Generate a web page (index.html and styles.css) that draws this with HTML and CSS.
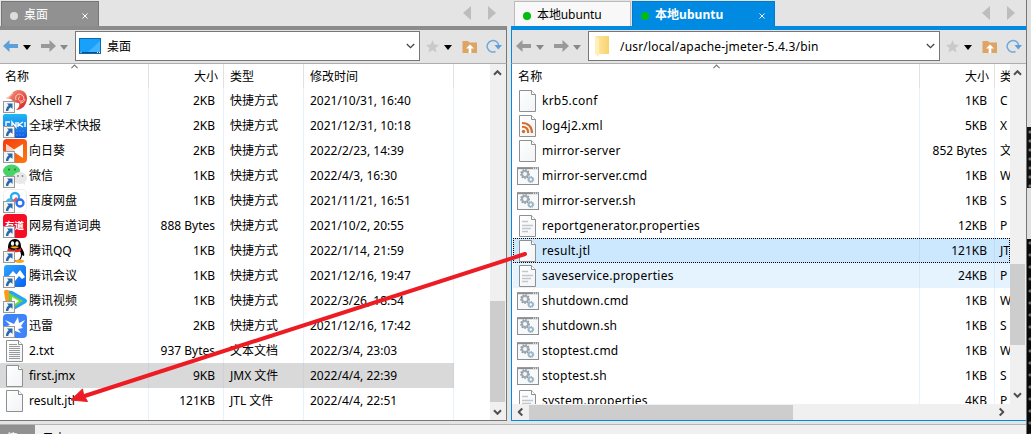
FILE: index.html
```html
<!DOCTYPE html>
<html lang="zh-CN">
<head>
<meta charset="utf-8">
<title>Xftp</title>
<link rel="stylesheet" href="styles.css">
</head>
<body>
<svg class="defs" width="0" height="0">
  <defs>
    <linearGradient id="g-paper" x1="0" y1="0" x2="1" y2="1"><stop offset="0" stop-color="#fff"/><stop offset="1" stop-color="#f1f3f5"/></linearGradient>
    <linearGradient id="g-folder"><stop offset="0" stop-color="#ffe9a6"/><stop offset="1" stop-color="#f8d270"/></linearGradient>
    <linearGradient id="g-shell" x1="0" y1="0" x2="1" y2="1"><stop offset="0" stop-color="#f9a284"/><stop offset="1" stop-color="#d7191f"/></linearGradient>
    <linearGradient id="g-cnki" x1="0" y1="0" x2="0" y2="1"><stop offset="0" stop-color="#20b8f5"/><stop offset="1" stop-color="#1458e0"/></linearGradient>
    <linearGradient id="g-sun" x1="0" y1="0" x2="1" y2="1"><stop offset="0" stop-color="#f23c10"/><stop offset="1" stop-color="#ff7a10"/></linearGradient>
    <linearGradient id="g-meet" x1="0" y1="0" x2="1" y2="1"><stop offset="0" stop-color="#2aa5ff"/><stop offset="1" stop-color="#0a62f0"/></linearGradient>
    <symbol id="link" viewBox="0 0 24 24"><rect x=".5" y="12.500" width="11" height="11" fill="#f6f6f6" stroke="#999"/><path d="M4 14.500h5.500v5.500l-1.700-1.700c-1.600 1-2.300 2-2.500 3.700h-2.300c-.2-2.300.8-4 2.700-5.800z" fill="#2968aa"/></symbol>
    <symbol id="file" viewBox="0 0 24 24"><path d="M3.500 1.500h12l4 4v17h-16z" fill="url(#g-paper)" stroke="#8d8f91"/><path d="M15.500 1.500v4h4" fill="#fff" stroke="#8d8f91"/></symbol>
    <symbol id="txt" viewBox="0 0 24 24"><use href="#file"/><path d="M6 5.500h8M6 7.500h11M6 9.500h11M6 11.500h11M6 13.500h11M6 15.500h11M6 17.500h11M6 19.500h11" stroke="#999"/></symbol>
    <symbol id="props" viewBox="0 0 24 24"><use href="#file"/><path d="M6 7.500h6M6 11.500h11M6 14.500h9M6 17.500h6" stroke="#c4c7ca" stroke-width="1.500"/></symbol>
    <symbol id="xml" viewBox="0 0 24 24"><use href="#file"/><circle cx="7.500" cy="17.500" r="1.700" fill="#d66d2e"/><path d="M6 12.800c4 0 6.200 2.400 6.200 6.200M6 9c6.500 0 10 4 10 10" fill="none" stroke="#d66d2e" stroke-width="2.100"/></symbol>
    <symbol id="cmd" viewBox="0 0 24 24"><rect x="1.500" y="4" width="21" height="16.500" fill="#f8f9fa" stroke="#8b8e91"/><path d="M1 4.200h22" stroke="#8b8e91" stroke-width="2"/><path d="M17 4.200h5" stroke="#fff" stroke-dasharray="1 1"/><circle cx="9" cy="10" r="3" fill="none" stroke="#a1abb3" stroke-width="2"/><circle cx="9" cy="10" r="4.200" fill="none" stroke="#8d98a0" stroke-width="1.400" stroke-dasharray="1.500 1.300"/><circle cx="14.800" cy="15.500" r="2" fill="none" stroke="#9bb5c7" stroke-width="1.600"/><circle cx="14.800" cy="15.500" r="3" fill="none" stroke="#7d9eb4" stroke-dasharray="1.200 1.100"/></symbol>
    <symbol id="xshell" viewBox="0 0 24 24"><path d="M2 9C8 9 8 1 16 1c5 0 8 4 8 8 0 7-5 12-11 12 3-2 4-5 3-7-3 0-6-1-8-4z" fill="url(#g-shell)"/><path d="M13 11c-2-5 4-8 7-4 2 3 0 6-3 5-2-1-2-4 0-4M4 9c3 0 4-3 6-5M17 14c3 0 5-2 5-4" fill="none" stroke="#fbd1c4" stroke-width="1"/><use href="#link"/></symbol>
    <symbol id="cnki" viewBox="0 0 24 24"><rect width="24" height="24" rx="2" fill="url(#g-cnki)"/><path d="M7 8H3v5M9 13V8l4 5V8M15 8v5M20 8l-4 2.500 4 2.500M22 8v5" fill="none" stroke="#fff" stroke-width="1.400"/><path d="M13 17h9M13 21h8" stroke="#3a8bf0" stroke-dasharray="2 1"/><use href="#link"/></symbol>
    <symbol id="sun" viewBox="0 0 24 24"><rect width="24" height="24" rx="4" fill="url(#g-sun)"/><path d="M3 5l8 5.500L20 5v14l-9-6-7 6z" fill="#fff"/><path d="M3 5l8.500 6.500L4 16z" fill="#ffd1c2"/><use href="#link"/></symbol>
    <symbol id="wechat" viewBox="0 0 24 24"><ellipse cx="8.500" cy="7" rx="8.500" ry="6.500" fill="#4ad266"/><circle cx="6" cy="5.500" r="1" fill="#1a7e37"/><circle cx="12" cy="5.500" r="1" fill="#1a7e37"/><ellipse cx="17" cy="14" rx="7" ry="6" fill="#e8e8e8"/><path d="M20 19l2 2v-4z" fill="#e8e8e8"/><circle cx="15" cy="12" r=".9" fill="#888"/><circle cx="19.500" cy="12" r=".9" fill="#888"/><use href="#link"/></symbol>
    <symbol id="pan" viewBox="0 0 24 24"><rect x=".5" y=".5" width="23" height="23" rx="4" fill="#fff" stroke="#eee"/><circle cx="12" cy="8" r="4" fill="none" stroke="#28a7f5" stroke-width="2.300"/><circle cx="7" cy="14" r="3.500" fill="none" stroke="#28bdf5" stroke-width="2.300"/><circle cx="17" cy="14" r="3.500" fill="none" stroke="#2b6ff2" stroke-width="2.300"/><path d="M10 13l4-4" stroke="#f44e60" stroke-width="2.500"/><use href="#link"/></symbol>
    <symbol id="youdao" viewBox="0 0 24 24"><rect width="24" height="24" rx="4" fill="#f40d25"/><text x="2" y="15" font-size="9.500" font-weight="bold" fill="#fff">有道</text><use href="#link"/></symbol>
    <symbol id="qq" viewBox="0 0 24 24"><path d="M5 9c0-6 3-9 7-9s6 3 6 8c2 3 4 6 3 9-1 0-2-1-2-1 0 4-3 7-7 7-6 0-9-5-7-14z" fill="#050505"/><ellipse cx="9.500" cy="4.500" rx="1.600" ry="2.200" fill="#fff"/><ellipse cx="14" cy="4.500" rx="1.600" ry="2.200" fill="#fff"/><path d="M7 8q5-1.500 9 0-4 3-9 0z" fill="#ffae13"/><ellipse cx="13" cy="16" rx="5" ry="5.500" fill="#fff"/><path d="M5 9q7 4 13 0v3q-3 2-8 1v4H8v-4l-3-1z" fill="#ee1d24"/><ellipse cx="16.500" cy="22.300" rx="4.500" ry="1.700" fill="#f9a716"/><use href="#link"/></symbol>
    <symbol id="meet" viewBox="0 0 24 24"><rect x="1" y="1" width="22" height="22" rx="3" fill="url(#g-meet)"/><path d="M3 15l7-8 3.500 3.500L17 6l5 7-3 2-3-3-4 5H6z" fill="#fff"/><use href="#link"/></symbol>
    <symbol id="video" viewBox="0 0 24 24"><path d="M1 3q0-3 4-2l9 4v14l-10 3z" fill="#ff9a17"/><path d="M6 2q2-1 5 1l12 7q2 2 0 4l-14 8q-4 0-3-5z" fill="#24a8f2"/><path d="M6 4l14 8-12 8q-2-9-2-16z" fill="#71d634"/><path d="M9 8l7 4-7 5z" fill="#fff"/><use href="#link"/></symbol>
    <symbol id="xunlei" viewBox="0 0 24 24"><rect width="24" height="24" rx="4" fill="#3f83fb"/><path d="M2 6l9 4 4-7 1 6 6-3-4 6 2 2-5 1 3 4-6-2-3 4v-6L4 12l3-1z" fill="#fff"/><use href="#link"/></symbol>
    <symbol id="nav-left" viewBox="0 0 16 12"><path d="M0 6l6.500-6v4H15v4H6.500v4z" fill="currentColor"/></symbol>
    <symbol id="caret" viewBox="0 0 8 5"><path d="M0 0h8L4 5z" fill="currentColor"/></symbol>
    <symbol id="chev" viewBox="0 0 9 6"><path d="M.8 1l3.700 3.700L8.200 1" fill="none" stroke="currentColor" stroke-width="1.300"/></symbol>
    <symbol id="sb-chev" viewBox="0 0 9 6"><path d="M1 4.800l3.500-3.600L8 4.800" fill="none" stroke="#505050" stroke-width="2"/></symbol>
    <symbol id="pager" viewBox="0 0 33 14"><path d="M8 0v14L0 7zM25 0v14l8-7z" fill="#bdbdbd"/></symbol>
    <symbol id="star" viewBox="0 0 13 13"><path d="M6.500 0l1.900 4.400 4.600.5-3.500 3 1 4.700-4-2.500-4 2.500 1-4.700L0 4.900l4.600-.5z" fill="#c9c9c9"/></symbol>
    <symbol id="upfolder" viewBox="0 0 15 13"><path d="M.5 1H6l1.500 1.500H15V13H.5z" fill="#dca564"/><path d="M8 4.500l4 4H9.300V13H6.700V8.500H4z" fill="#fff"/></symbol>
    <symbol id="refresh" viewBox="0 0 16 14"><path d="M9.500 12.500A5.800 5.800 0 1 1 12.700 6.500" fill="none" stroke="#70a9dc" stroke-width="1.500"/><path d="M8.500 6H16l-3.700 4.500z" fill="#5d9edc"/></symbol>
  </defs>
</svg>
<main class="app">
  <div class="panels">
    <section class="panel local">
      <div class="tabs">
        <div class="tab gray"><i class="dot"></i><span>桌面</span><svg class="close" viewBox="0 0 6 6"><path d="M.5.5l5 5m0-5l-5 5" stroke="currentColor"/></svg></div>
        <svg class="pager"><use href="#pager"/></svg>
      </div>
      <div class="toolbar">
        <div class="nav"><svg class="arr on"><use href="#nav-left"/></svg><svg class="caret dark"><use href="#caret"/></svg><svg class="arr fwd"><use href="#nav-left"/></svg><svg class="caret"><use href="#caret"/></svg></div>
        <div class="address"><svg class="desk" viewBox="0 0 22 16"><rect x=".5" y=".5" width="21" height="15" fill="#19a0fa" stroke="#066cae"/><path d="M9 14L21 3v11z" fill="#42b3ff"/><path d="M1 14.500h20" stroke="#064d83"/><path d="M1.500 14.500h1M18 14.500h3" stroke="#fff" stroke-dasharray="1 1"/></svg><span>桌面</span><svg class="chev"><use href="#chev"/></svg></div>
        <svg class="star"><use href="#star"/></svg><svg class="caret dark"><use href="#caret"/></svg><svg class="upf"><use href="#upfolder"/></svg><svg class="ref"><use href="#refresh"/></svg>
      </div>
      <div class="body">
        <div class="list">
          <svg class="sort"><use href="#chev"/></svg>
          <div class="row head"><b>名称</b><b>大小</b><b>类型</b><b>修改时间</b></div>
          <div class="row"><b><svg><use href="#xshell"/></svg>Xshell 7</b><b>2KB</b><b>快捷方式</b><b>2021/10/31, 16:40</b></div>
          <div class="row"><b><svg><use href="#cnki"/></svg>全球学术快报</b><b>2KB</b><b>快捷方式</b><b>2021/12/31, 10:18</b></div>
          <div class="row"><b><svg><use href="#sun"/></svg>向日葵</b><b>2KB</b><b>快捷方式</b><b>2022/2/23, 14:39</b></div>
          <div class="row"><b><svg><use href="#wechat"/></svg>微信</b><b>1KB</b><b>快捷方式</b><b>2022/4/3, 16:30</b></div>
          <div class="row"><b><svg><use href="#pan"/></svg>百度网盘</b><b>1KB</b><b>快捷方式</b><b>2021/11/21, 16:51</b></div>
          <div class="row"><b><svg><use href="#youdao"/></svg>网易有道词典</b><b>888 Bytes</b><b>快捷方式</b><b>2021/10/2, 20:55</b></div>
          <div class="row"><b><svg><use href="#qq"/></svg>腾讯QQ</b><b>1KB</b><b>快捷方式</b><b>2022/1/14, 21:59</b></div>
          <div class="row"><b><svg><use href="#meet"/></svg>腾讯会议</b><b>1KB</b><b>快捷方式</b><b>2021/12/16, 19:47</b></div>
          <div class="row"><b><svg><use href="#video"/></svg>腾讯视频</b><b>1KB</b><b>快捷方式</b><b>2022/3/26, 18:54</b></div>
          <div class="row"><b><svg><use href="#xunlei"/></svg>迅雷</b><b>2KB</b><b>快捷方式</b><b>2021/12/16, 17:42</b></div>
          <div class="row"><b><svg><use href="#txt"/></svg>2.txt</b><b>937 Bytes</b><b>文本文档</b><b>2022/3/4, 23:03</b></div>
          <div class="row picked"><b><svg><use href="#file"/></svg>first.jmx</b><b>9KB</b><b>JMX 文件</b><b>2022/4/4, 22:39</b></div>
          <div class="row"><b><svg><use href="#file"/></svg>result.jtl</b><b>121KB</b><b>JTL 文件</b><b>2022/4/4, 22:51</b></div>
          <div class="row rest"><b></b><b></b><b></b><b></b></div>
        </div>
        <div class="vbar"><svg class="sb"><use href="#sb-chev"/></svg><i class="thumb"></i><svg class="sb down"><use href="#sb-chev"/></svg></div>
      </div>
    </section>
    <section class="panel remote">
      <div class="tabs">
        <div class="tab white"><i class="dot"></i><span>本地ubuntu</span></div>
        <div class="tab blue"><i class="dot"></i><span>本地ubuntu</span><svg class="close" viewBox="0 0 6 6"><path d="M.5.5l5 5m0-5l-5 5" stroke="currentColor"/></svg></div>
        <svg class="pager"><use href="#pager"/></svg>
      </div>
      <div class="toolbar">
        <div class="nav"><svg class="arr"><use href="#nav-left"/></svg><svg class="caret"><use href="#caret"/></svg><svg class="arr fwd"><use href="#nav-left"/></svg><svg class="caret"><use href="#caret"/></svg></div>
        <div class="address"><svg class="folder" viewBox="0 0 15 21"><path d="M0 0h14v18H4z" fill="url(#g-folder)"/><path d="M0 0l4 3v18l-4-3z" fill="#ffefb9"/></svg><span class="path">/usr/local/apache-jmeter-5.4.3/bin</span><svg class="chev"><use href="#chev"/></svg></div>
        <svg class="star"><use href="#star"/></svg><svg class="caret dark"><use href="#caret"/></svg><svg class="upf"><use href="#upfolder"/></svg><svg class="ref"><use href="#refresh"/></svg>
      </div>
      <div class="body">
        <div class="list">
          <svg class="sort"><use href="#chev"/></svg>
          <div class="row head"><b>名称</b><b>大小</b><b>类</b></div>
          <div class="row"><b><svg><use href="#file"/></svg>krb5.conf</b><b>1KB</b><b>C</b></div>
          <div class="row"><b><svg><use href="#xml"/></svg>log4j2.xml</b><b>5KB</b><b>X</b></div>
          <div class="row"><b><svg><use href="#file"/></svg>mirror-server</b><b>852 Bytes</b><b>文</b></div>
          <div class="row"><b><svg><use href="#cmd"/></svg>mirror-server.cmd</b><b>1KB</b><b>W</b></div>
          <div class="row"><b><svg><use href="#cmd"/></svg>mirror-server.sh</b><b>1KB</b><b>S</b></div>
          <div class="row"><b><svg><use href="#props"/></svg>reportgenerator.properties</b><b>12KB</b><b>P</b></div>
          <div class="row focus"><b><svg><use href="#file"/></svg>result.jtl</b><b>121KB</b><b>JT</b></div>
          <div class="row hover"><b><svg><use href="#props"/></svg>saveservice.properties</b><b>24KB</b><b>P</b></div>
          <div class="row"><b><svg><use href="#cmd"/></svg>shutdown.cmd</b><b>1KB</b><b>W</b></div>
          <div class="row"><b><svg><use href="#cmd"/></svg>shutdown.sh</b><b>1KB</b><b>S</b></div>
          <div class="row"><b><svg><use href="#cmd"/></svg>stoptest.cmd</b><b>1KB</b><b>W</b></div>
          <div class="row"><b><svg><use href="#cmd"/></svg>stoptest.sh</b><b>1KB</b><b>S</b></div>
          <div class="row"><b><svg><use href="#props"/></svg>system.properties</b><b>4KB</b><b>P</b></div>
        </div>
        <div class="vbar"><svg class="sb"><use href="#sb-chev"/></svg><i class="thumb"></i><svg class="sb down"><use href="#sb-chev"/></svg></div>
      </div>
      <div class="hbar"><svg class="sb left"><use href="#sb-chev"/></svg><i class="thumb"></i><svg class="sb right"><use href="#sb-chev"/></svg></div>
    </section>
    <div class="edge"><i></i><i class="term"></i><i></i><i class="term long"></i></div>
  </div>
  <footer class="bottom"><span class="active">传输</span><span>日志</span></footer>
  <svg class="pointer" width="1031" height="434"><path d="M525 254L83 396.500" stroke="#ed1c24" stroke-width="4" stroke-linecap="round"/><path d="M71 400l11.500-11 1 5.500 4 7z" fill="#ed1c24" stroke="#ed1c24" stroke-linejoin="round"/></svg>
</main>
</body>
</html>
```
FILE: styles.css
```css
* { box-sizing: border-box; }
body { margin: 0; background: #e4e4e4; color: #000; font: 12px/25px "Noto Sans", "Noto Sans CJK SC", sans-serif; overflow: hidden; }
.defs { position: absolute; }
svg { display: block; flex: none; }
b { font-weight: normal; }
.app { position: relative; width: 1031px; height: 434px; overflow: hidden; }
.panels { display: flex; height: 421px; }
.panel { display: flex; flex-direction: column; height: 421px; }
.local { width: 507px; margin-right: 4px; }
.remote { width: 515px; }

.tabs { display: flex; height: 26px; padding-top: 1px; flex: none; }
.tab { display: flex; align-items: center; border: 1px solid; border-bottom: 0; height: 25px; }
.dot { width: 8px; height: 8px; border-radius: 50%; background: #00bd10; flex: none; margin-top: 4px; }
.tab span { margin-top: 1px; white-space: nowrap; }
.close { width: 6px; height: 6px; margin-left: auto; margin-top: 3px; }
.gray { width: 98px; margin-left: 1px; padding: 0 10px 0 8px; gap: 6px; background: #919191; border-color: #777; color: #fff; }
.gray .dot { background: #ddd; }
.white { width: 117px; margin-left: 3px; padding-left: 8px; gap: 6px; background: #f8f8f8; border-color: #bbb; }
.white span { letter-spacing: -.1px; }
.blue { width: 143px; margin-left: 1px; padding: 0 9px 0 8px; gap: 6px; background: #008ae2; border-color: #007bd0; color: #fff; font-weight: bold; }
.blue span { letter-spacing: .05px; }
.pager { width: 33px; height: 14px; margin: 5px 11px 0 auto; }

.toolbar { display: flex; align-items: center; height: 38px; flex: none; border-top: 4px solid #8e8e8e; border-bottom: 1px solid #adadad; padding: 0 5px 1px 3px; }
.local .toolbar { border-right: 1px solid #777; border-top-color: #8b8b8b; }
.remote .toolbar { border-left: 1px solid #008ae2; border-top-color: #008ae2; padding: 0 4px 1px 4px; }
.nav { display: flex; align-items: center; width: 72px; color: #999; flex: none; }
.arr { width: 16px; height: 12px; }
.arr.on { color: #5c9fda; }
.fwd { transform: scaleX(-1); margin-left: 9px; }
.caret { width: 8px; height: 5px; margin: 2px 0 0 4px; color: #888; }
.dark { color: #000; }
.address { display: flex; align-items: center; width: 345px; height: 30px; border: 1px solid #777; background: #fff; padding: 0 4px 0 3px; flex: none; }
.remote .address { width: 352px; }
.desk { width: 22px; height: 16px; margin-right: 6px; }
.folder { width: 15px; height: 21px; margin: 0 10px 0 3px; }
.path { letter-spacing: .18px; }
.chev { width: 9px; height: 6px; margin-left: auto; color: #444; }
.star { width: 13px; height: 13px; margin-left: 6px; }
.star + .caret { margin-left: 5px; }
.upf { width: 15px; height: 13px; margin-left: 10px; }
.ref { width: 16px; height: 14px; margin-left: 9px; }

.body { display: flex; flex: 1; min-height: 0; background: #fff; }
.local .body { border-right: 1px solid #777; border-bottom: 1px solid #777; }
.remote .body { border-left: 1px solid #008ae2; }
.list { position: relative; flex: 1; overflow: hidden; }
.remote .list { padding-left: 1px; }
.sort { position: absolute; left: 70px; top: 0; width: 9px; height: 5px; color: #777; transform: scaleY(-1); }
.remote .sort { left: 200px; }
.row { display: grid; grid-template-columns: 149px 75px 80px 150px; width: 454px; height: 25px; white-space: nowrap; }
.remote .row { grid-template-columns: 407px 75px 15px; width: 497px; }
.row b { display: flex; align-items: center; border-right: 1px solid #e8f2fc; padding-left: 6px; overflow: hidden; }
.row b:nth-child(1) { padding-left: 3px; }
.row b:nth-child(2) { justify-content: flex-end; padding: 0 8px 0 0; }
.remote .row b:nth-child(2) { padding-right: 7px; }
.remote .row b:nth-child(1) { letter-spacing: .25px; }
.remote .row b:nth-child(3) { border: 0; padding-left: 5px; overflow: visible; }
.row svg { width: 24px; height: 24px; margin-right: 2px; }
.row.head { height: 24px; }
.head b { border-color: #e2e2e2; }
.row.head b:nth-child(1) { padding-left: 5px; }
.row.head b:nth-child(2) { padding-right: 5px; }
.picked { background: #d9d9d9; }
.picked b { border-color: #ccd2d8; }
.row.rest { height: 7px; }
.focus { background: #cce8ff; outline: 1px dotted #000; outline-offset: -1px; }
.focus b { border-color: #bddcf5; }
.hover { background: #e5f3ff; }
.hover b { border-color: #d3e8f8; }
.vbar { display: flex; flex-direction: column; align-items: center; width: 16px; padding: 6px 1px 5px 0; background: #f0f0f0; flex: none; }
.vbar .thumb { width: 15px; height: 101px; margin-top: 225px; background: #cdcdcd; }
.remote .vbar { padding-bottom: 6px; }
.remote .vbar .thumb { height: 81px; margin-top: 188px; }
.sb { width: 9px; height: 6px; }
.down { margin-top: auto; transform: scaleY(-1); }
.hbar { display: flex; align-items: center; height: 17px; padding: 0 20px 0 4px; background: #f0f0f0; border-left: 1px solid #008ae2; border-bottom: 1px solid #008ae2; flex: none; }
.hbar .thumb { width: 264px; height: 15px; margin-left: 4px; background: #cdcdcd; }
.left { transform: rotate(-90deg); }
.right { transform: rotate(90deg); margin-left: auto; }

.edge { display: flex; flex-direction: column; width: 5px; height: 434px; border-left: 1px solid #777; }
.edge i { height: 127px; background: #e0e0e0; flex: none; }
.edge i.term { height: 61px; background: radial-gradient(circle at 3px 5px, #777 1px, #111 2px) 0 0 / 5px 9px; }
.edge i:nth-child(3) { height: 51px; }
.edge i.long { height: 195px; background: radial-gradient(circle at 3px 4px, #716b62 1px, #090909 2px) 0 0 / 5px 12px; }

.bottom { display: flex; width: 1026px; height: 10px; margin-top: 3px; border-top: 1px solid #b5b5b5; background: #f0f0f0; overflow: hidden; }
.bottom span { height: 27px; padding: 0 6px; line-height: 27px; }
.bottom .active { width: 35px; background: #919191; color: #fff; margin-right: 1px; }
.pointer { position: absolute; left: 0; top: 0; }
```
